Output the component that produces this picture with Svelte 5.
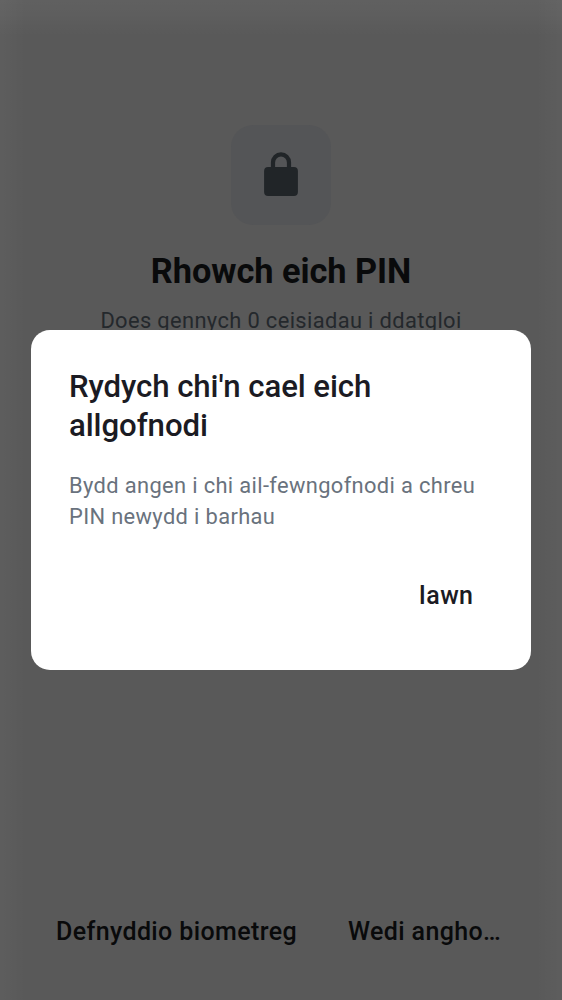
<script>
  const actions = ['Defnyddio biometreg', 'Wedi angho…'];
</script>

<main class="screen">
  <div class="tile">
    <svg viewBox="0 0 34 45" width="34" height="45" aria-hidden="true">
      <path d="M9 16V10.5a8 8.2 0 0 1 16 0V16" fill="none" stroke="#212528" stroke-width="4.2" />
      <rect x="0.1" y="15" width="33.8" height="29" rx="4" fill="#212528" />
    </svg>
  </div>
  <h1>Rhowch eich PIN</h1>
  <p class="hint">Does gennych 0 ceisiadau i ddatgloi</p>
  <footer>
    {#each actions as action}
      <button class="action">{action}</button>
    {/each}
  </footer>

  <div class="overlay">
    <div class="dialog" role="dialog" aria-modal="true">
      <h2>Rydych chi'n cael eich allgofnodi</h2>
      <p class="message">Bydd angen i chi ail-fewngofnodi a chreu PIN newydd i barhau</p>
      <button class="confirm">Iawn</button>
    </div>
  </div>
</main>

<style>
  :global(body) { margin: 0; }
  .screen {
    position: relative;
    box-sizing: border-box;
    width: 562px;
    height: 1000px;
    overflow: hidden;
    padding-top: 125px;
    display: flex;
    flex-direction: column;
    align-items: center;
    font-family: Roboto, sans-serif;
    background:
      linear-gradient(to bottom, rgba(255, 255, 255, 0.042), rgba(255, 255, 255, 0.03) 14px, transparent 36px),
      linear-gradient(to right, rgba(255, 255, 255, 0.028), transparent 26px),
      linear-gradient(to left, rgba(255, 255, 255, 0.028), transparent 26px),
      #595959;
  }
  h1, h2, p { margin: 0; }
  button { border: 0; padding: 0; background: none; font: inherit; }
  .tile {
    width: 100px;
    height: 100px;
    border-radius: 22px;
    background: #545557;
    display: flex;
    align-items: center;
    justify-content: center;
  }
  .tile svg { display: block; margin-top: -2px; }
  h1 {
    margin-top: 25px;
    font-size: 34.34px;
    line-height: 42px;
    font-weight: 700;
    letter-spacing: -0.05px;
    color: #090a0b;
    white-space: nowrap;
  }
  .hint {
    margin-top: 13px;
    font-size: 21.86px;
    line-height: 31px;
    letter-spacing: 0.37px;
    color: #24282c;
    white-space: nowrap;
  }
  footer {
    margin-top: auto;
    box-sizing: border-box;
    width: 100%;
    height: 93px;
    padding: 10px 56px 0;
    display: flex;
    gap: 51px;
  }
  .action {
    height: 30px;
    font-size: 25px;
    line-height: 30px;
    font-weight: 500;
    letter-spacing: 0.38px;
    color: #090a0b;
    white-space: nowrap;
  }
  .overlay {
    position: absolute;
    inset: 0;
    display: flex;
    align-items: center;
    justify-content: center;
  }
  .dialog {
    box-sizing: border-box;
    width: 500px;
    height: 340px;
    padding: 37px 38px;
    border-radius: 19px;
    background: #fff;
    display: flex;
    flex-direction: column;
  }
  h2 {
    font-size: 31.2px;
    line-height: 39px;
    font-weight: 500;
    letter-spacing: -0.08px;
    color: #1b1b23;
  }
  .message {
    margin-top: 25px;
    font-size: 21.86px;
    line-height: 31.2px;
    letter-spacing: 0.36px;
    color: #69727d;
  }
  .confirm {
    align-self: flex-end;
    margin-top: 49px;
    margin-right: 19.6px;
    font-size: 25px;
    line-height: 30px;
    font-weight: 500;
    letter-spacing: 0.38px;
    color: #1b1b23;
  }
</style>
